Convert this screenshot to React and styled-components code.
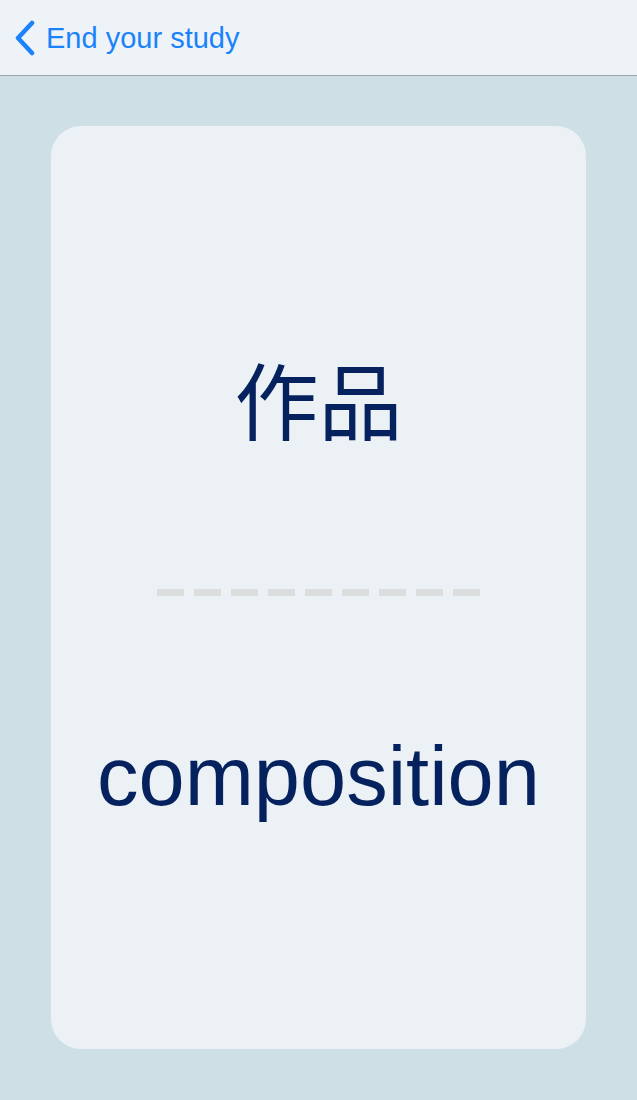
import React from "react";
import styled, { createGlobalStyle } from "styled-components";

const GlobalStyle = createGlobalStyle`
  html, body {
    margin: 0;
    padding: 0;
    background: #cfdfe6;
  }
  body {
    font-family: "Liberation Sans", "Noto Sans CJK JP", sans-serif;
  }
`;

const Page = styled.div`
  width: 637px;
  height: 1100px;
  display: flex;
  flex-direction: column;
  background: #cfdfe6;
  overflow: hidden;
`;

const Header = styled.header`
  height: 75px;
  flex-shrink: 0;
  display: flex;
  align-items: center;
  padding-left: 14px;
  background: #eef3f7;
  border-bottom: 1px solid #9ea4a8;
`;

const BackButton = styled.button`
  display: flex;
  align-items: center;
  gap: 10px;
  border: none;
  background: none;
  padding: 0;
  margin-top: 1px;
  color: #1a82fb;
  font-family: "Liberation Sans", sans-serif;
  font-size: 29px;
  cursor: pointer;
`;

const Body = styled.main`
  flex: 1;
  padding: 50px 51px 51px;
  display: flex;
`;

const Card = styled.section`
  flex: 1;
  background: #ebf1f4;
  border-radius: 30px;
  display: flex;
  flex-direction: column;
  align-items: center;
`;

const Term = styled.div`
  margin-top: 222px;
  font-family: "Noto Sans CJK JP", "Noto Sans CJK SC", sans-serif;
  font-size: 84px;
  line-height: 100px;
  color: #06225e;
`;

const Divider = styled.div`
  margin-top: 141px;
  display: flex;
  gap: 10px;
`;

const Dash = styled.span`
  width: 27px;
  height: 7px;
  background: #dcdddd;
`;

const Meaning = styled.div`
  margin-top: 131px;
  font-family: "Liberation Sans", sans-serif;
  font-size: 83px;
  line-height: 100px;
  color: #06225e;
`;

function Chevron() {
  return (
    <svg width="22" height="36" viewBox="0 0 22 36" fill="none">
      <path
        d="M18 3 L4 18 L18 33"
        stroke="currentColor"
        strokeWidth="4.5"
        strokeLinecap="round"
        strokeLinejoin="round"
      />
    </svg>
  );
}

export default function App() {
  const dashes = Array.from({ length: 9 });

  return (
    <Page>
      <GlobalStyle />
      <Header>
        <BackButton>
          <Chevron />
          End your study
        </BackButton>
      </Header>
      <Body>
        <Card>
          <Term>作品</Term>
          <Divider>
            {dashes.map((_, i) => (
              <Dash key={i} />
            ))}
          </Divider>
          <Meaning>composition</Meaning>
        </Card>
      </Body>
    </Page>
  );
}
